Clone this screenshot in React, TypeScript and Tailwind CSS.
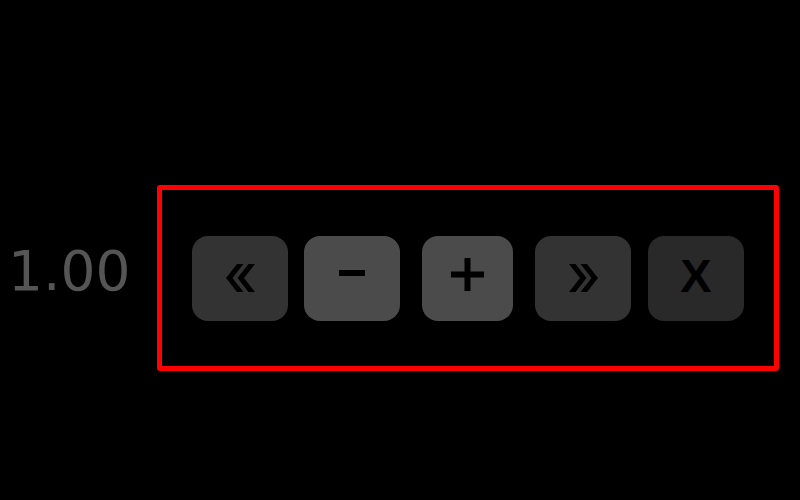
import React from 'react';

const Chevrons = ({ dir }: { dir: 'left' | 'right' }) => (
  <svg width="29" height="28" viewBox="0 0 29 28" className={dir === 'right' ? 'scale-x-[-1]' : ''}>
    <polygon points="11,0 17.5,0 6.5,14 17.5,28 11,28 0,14" fill="#000" />
    <polygon points="22.5,0 29,0 18,14 29,28 22.5,28 11.5,14" fill="#000" />
  </svg>
);

const Minus = () => (
  <svg width="26" height="6" viewBox="0 0 26 6" className="mb-[10px]">
    <rect x="0" y="0" width="26" height="6" fill="#000" />
  </svg>
);

const Plus = () => (
  <svg width="33" height="33" viewBox="0 0 33 33" className="mb-[7px]">
    <rect x="0" y="13.5" width="33" height="6" fill="#000" />
    <rect x="13.5" y="0" width="6" height="33" fill="#000" />
  </svg>
);

export default function App() {
  return (
    <main className="w-[800px] h-[500px] bg-black flex items-start pt-[185px] overflow-hidden">
      {/* speed readout */}
      <div className="w-[157px] h-[186px] flex items-center">
        <span className="ml-[8px] mb-[14px] text-[55px] leading-none font-['DejaVu_Sans',sans-serif] text-[#555555]">
          1.00
        </span>
      </div>

      {/* highlighted control strip */}
      <div className="w-[622px] h-[186px] border-[5px] border-[#ff0000] rounded-[3px] flex items-center pl-[30px]">
        <button className="w-[96px] h-[85px] rounded-[16px] bg-[#333333] flex items-center justify-center">
          <Chevrons dir="left" />
        </button>
        <button className="ml-[16px] w-[96px] h-[85px] rounded-[16px] bg-[#4b4b4b] flex items-center justify-center">
          <Minus />
        </button>
        <button className="ml-[22px] w-[91px] h-[85px] rounded-[16px] bg-[#4b4b4b] flex items-center justify-center">
          <Plus />
        </button>
        <button className="ml-[22px] w-[96px] h-[85px] rounded-[16px] bg-[#333333] flex items-center justify-center">
          <Chevrons dir="right" />
        </button>
        <button className="ml-[17px] w-[96px] h-[85px] rounded-[16px] bg-[#292929] flex items-center justify-center text-[47px] leading-none font-bold text-black font-['Liberation_Sans',Arial,sans-serif]">
          <span className="mb-[6px]">X</span>
        </button>
      </div>
    </main>
  );
}
